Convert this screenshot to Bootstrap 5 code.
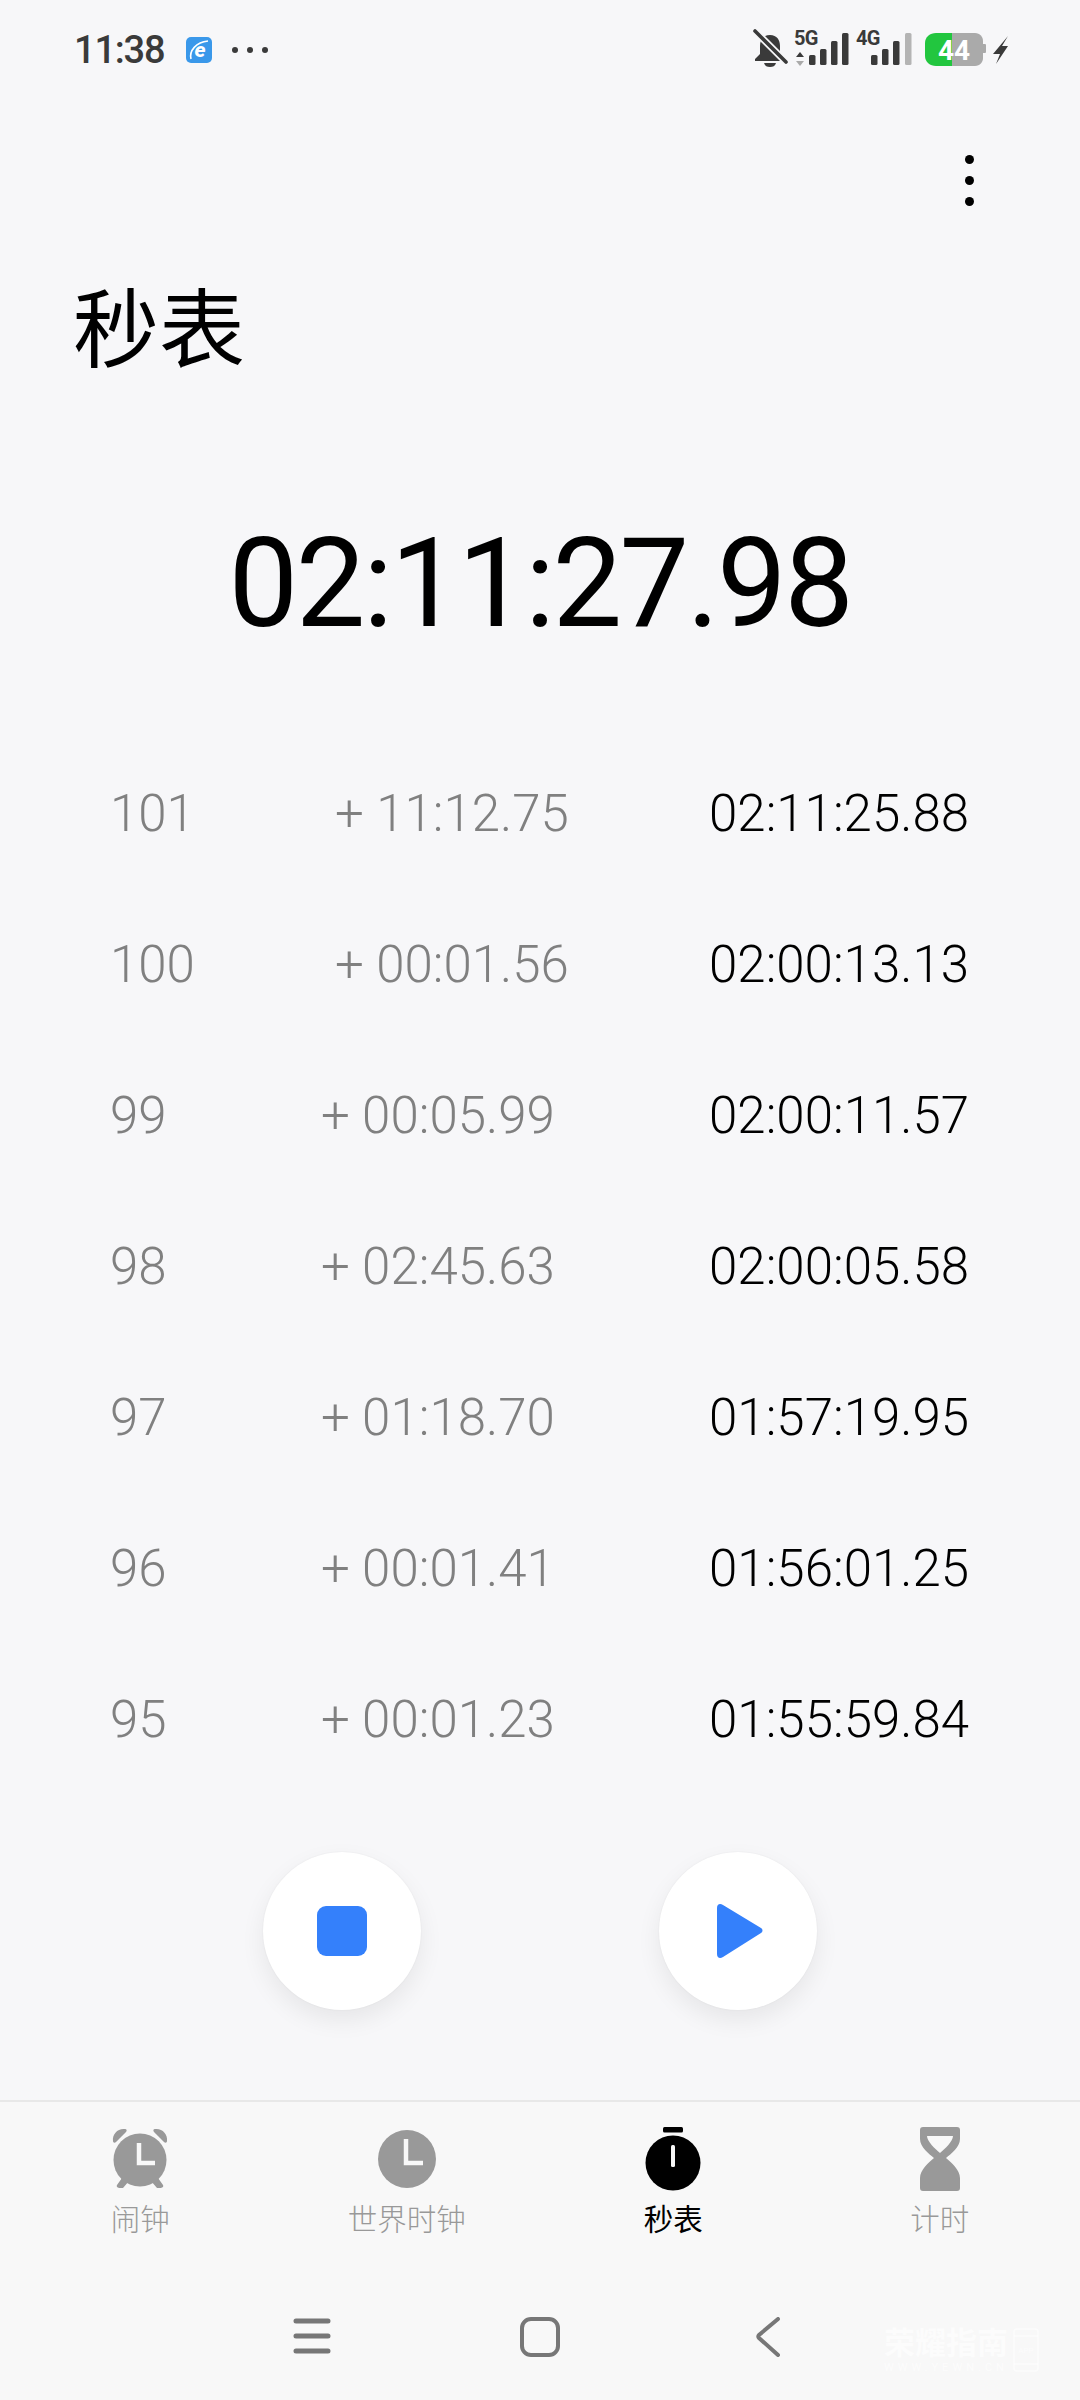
<!DOCTYPE html>
<html lang="zh-Hans">
<head>
  <meta charset="utf-8">
  <title>秒表</title>
  <meta name="viewport" content="width=device-width, initial-scale=1">
  <link href="https://cdn.jsdelivr.net/npm/bootstrap@5.3.3/dist/css/bootstrap.min.css" rel="stylesheet">
  <style>
    html, body { height: 2400px; }
    body { background: #f7f7f9; font-family: Roboto, "Noto Sans CJK SC", sans-serif; color: #000; overflow: hidden; }
    .status-bar { height: 100px; padding: 0 72px 0 74px; }
    .status-time { font-size: 38px; font-weight: 500; color: #3a3a3a; line-height: 1; letter-spacing: -1.2px; }
    .status-app { margin-left: 22px; }
    .status-more { margin-left: 20px; gap: 9px; }
    .status-more span { width: 6px; height: 6px; border-radius: 50%; background: #3a3a3a; }
    .menu-row { height: 160px; padding-right: 106px; }
    .menu-dot { width: 9px; height: 9px; border-radius: 50%; background: #000; }
    .menu-dots { gap: 12px; }
    .page-title { font-size: 86px; font-weight: 400; line-height: 1; margin: 21px 0 0 73px; font-family: "Noto Sans CJK SC", sans-serif; }
    .big-time { font-size: 124px; font-weight: 400; line-height: 1; text-align: center; margin-top: 155px; letter-spacing: -2.5px; }
    .lap-list { margin-top: 92px; padding: 0 111px 0 110px; }
    .lap-row { height: 151px; font-size: 51px; line-height: 1; }
    .lap-num, .lap-delta { color: #808080; font-weight: 300; }
    .lap-total { font-weight: 350; }
    .ctrl-row { margin-top: 57px; gap: 238px; padding-right: 1px; }
    .ctrl-btn { width: 158px; height: 158px; border-radius: 50%; background: #fff; border: 0; padding: 0; box-shadow: 0 10px 24px rgba(0, 0, 0, .07), 0 0 2px rgba(0, 0, 0, .06); }
    .tab-bar { margin-top: 90px; height: 190px; border-top: 2px solid #e8e8e8; background: #f8f8f8; padding: 0 7px; }
    .tab-item { color: #999; font-size: 29.5px; line-height: 1; font-family: "Noto Sans CJK SC", sans-serif; font-weight: 300; }
    .tab-item svg { display: block; margin-top: 26px; margin-bottom: 13px; }
    .tab-on { color: #000; font-weight: 400; }
    .sys-bar { height: 110px; background: #f8f8f8; }
    .sys-slot { width: 228px; margin-top: 3px; }
    .wm { right: 41px; top: 38px; color: rgba(255, 255, 255, .6); gap: 5px; }
    .wm-name { font-size: 31px; line-height: 32px; font-family: Roboto, "Noto Sans CJK SC", sans-serif; font-weight: 700; }
    .wm-sub { font-size: 11px; line-height: 12px; letter-spacing: 4px; margin-top: 2px; font-family: Roboto, sans-serif; }
  </style>
</head>
<body>
  <div class="d-flex flex-column" style="height:2400px">

    <div class="status-bar d-flex align-items-center justify-content-between">
      <div class="d-flex align-items-center">
        <span class="status-time">11:38</span>
        <svg class="status-app" width="26" height="26" viewBox="0 0 26 26">
          <rect width="26" height="26" rx="5" fill="#3a98ea"/>
          <path d="M5 22C3 14 10 5 22 4" stroke="#fff" stroke-width="1.6" fill="none"/>
          <text x="14" y="20" text-anchor="middle" font-family="Roboto" font-style="italic" font-weight="800" font-size="21" fill="#fff">e</text>
        </svg>
        <div class="status-more d-flex"><span></span><span></span><span></span></div>
      </div>
      <svg width="256" height="50" viewBox="752 20 256 50" style="margin-top:-10px">
        <path d="M770 35c-7 0-10 5-10 11v8l-5 5v2h30v-2l-5-5v-8c0-6-3-11-10-11z" fill="#3a3a3a"/>
        <path d="M764 63h12c-1 3-3 4-6 4s-5-1-6-4z" fill="#3a3a3a"/>
        <path d="M755 31l31 31" stroke="#f7f7f9" stroke-width="7"/>
        <path d="M755 31l31 31" stroke="#3a3a3a" stroke-width="3.6" stroke-linecap="round"/>
        <text x="794" y="45" font-family="Roboto" font-weight="700" font-size="20" fill="#3a3a3a" letter-spacing="-.8">5G</text>
        <path d="M800 52l4 5h-8z" fill="#3a3a3a"/><path d="M800 66l4-5h-8z" fill="#aaa"/>
        <rect x="809" y="55" width="6.5" height="10" rx="1.5" fill="#3a3a3a"/>
        <rect x="820" y="49" width="6.5" height="16" rx="1.5" fill="#3a3a3a"/>
        <rect x="831" y="41" width="6.5" height="24" rx="1.5" fill="#3a3a3a"/>
        <rect x="842" y="33" width="6.5" height="32" rx="1.5" fill="#3a3a3a"/>
        <text x="856" y="45" font-family="Roboto" font-weight="700" font-size="20" fill="#3a3a3a" letter-spacing="-.8">4G</text>
        <rect x="871" y="55" width="6.5" height="10" rx="1.5" fill="#3a3a3a"/>
        <rect x="882" y="49" width="6.5" height="16" rx="1.5" fill="#3a3a3a"/>
        <rect x="893" y="41" width="6.5" height="24" rx="1.5" fill="#3a3a3a"/>
        <rect x="905" y="33" width="6.5" height="32" rx="1.5" fill="#b4b4b4"/>
        <path d="M952 33h23c5 0 8 4 8 8v17c0 4-3 8-8 8h-23z" fill="#aaa"/>
        <path d="M983 44h2c1 0 1 1 1 1v7s0 1-1 1h-2z" fill="#aaa"/>
        <path d="M952 33h-16c-6 0-11 4-11 10v13c0 6 5 10 11 10h16z" fill="#22c63f"/>
        <text x="954" y="60" text-anchor="middle" font-family="Roboto" font-weight="700" font-size="28" fill="#fff">44</text>
        <path d="M1008 36l-15 18h7l-4 10 12-18h-6z" fill="#3a3a3a"/>
      </svg>
    </div>

    <div class="menu-row d-flex justify-content-end align-items-center">
      <div class="menu-dots d-flex flex-column">
        <span class="menu-dot"></span><span class="menu-dot"></span><span class="menu-dot"></span>
      </div>
    </div>

    <h1 class="page-title">秒表</h1>

    <div class="big-time">02:11:27.98</div>

    <div class="lap-list" id="laps"></div>

    <div class="ctrl-row d-flex justify-content-center">
      <button class="ctrl-btn d-flex align-items-center justify-content-center" type="button" aria-label="停止">
        <svg width="50" height="50" viewBox="0 0 50 50"><rect width="50" height="50" rx="9" fill="#3480fb"/></svg>
      </button>
      <button class="ctrl-btn d-flex align-items-center justify-content-center" type="button" aria-label="继续">
        <svg width="48" height="56" viewBox="0 0 48 56" style="margin-left:5px"><path d="M1 5c0-4 3-5 6-3l38 23c2 1 2 4 0 5L7 54c-3 2-6 1-6-3z" fill="#3480fb"/></svg>
      </button>
    </div>

    <nav class="tab-bar row g-0">
      <div class="tab-item col-3 d-flex flex-column align-items-center">
        <svg width="56" height="62" viewBox="0 0 56 62">
          <path d="M1 13C0 6 6 0 13 1c2 0 2 2 1 3L4 14c-1 1-3 1-3-1zM55 13c1-7-5-13-12-12-2 0-2 2-1 3l10 10c1 1 3 1 3-1z" fill="#999"/>
          <path d="M10 50l-5 7c-1 2 1 3 3 3h3l6-7zM46 50l5 7c1 2-1 3-3 3h-3l-6-7z" fill="#999"/>
          <circle cx="28" cy="32" r="26.5" fill="#999"/>
          <path d="M27 15v20h16" fill="none" stroke="#f8f8f8" stroke-width="4.5"/>
        </svg>
        <span>闹钟</span>
      </div>
      <div class="tab-item col-3 d-flex flex-column align-items-center">
        <svg width="58" height="62" viewBox="0 0 58 62">
          <circle cx="29" cy="31" r="29" fill="#999"/>
          <path d="M28 11v24h17" fill="none" stroke="#f8f8f8" stroke-width="4.5"/>
        </svg>
        <span>世界时钟</span>
      </div>
      <div class="tab-item tab-on col-3 d-flex flex-column align-items-center">
        <svg width="56" height="64" viewBox="0 0 56 64" style="margin-top:25px;margin-bottom:12px">
          <rect x="18" y="0" width="20" height="5.5" rx="1.5" fill="#000"/>
          <circle cx="28" cy="36" r="27.5" fill="#000"/>
          <rect x="26" y="18" width="4" height="22" rx="1.5" fill="#f8f8f8"/>
        </svg>
        <span>秒表</span>
      </div>
      <div class="tab-item col-3 d-flex flex-column align-items-center">
        <svg width="40" height="64" viewBox="0 0 40 64" style="margin-top:25px;margin-bottom:12px">
          <path fill-rule="evenodd" d="M3 0h34c2 0 3 1 3 3v9c0 8-9 15-14 19 5 4 14 12 14 20v10c0 2-1 3-3 3H3c-2 0-3-1-3-3V51c0-8 9-16 14-20C9 27 0 20 0 12V3c0-2 1-3 3-3zM7 9c0 5 8 13 13 17 5-4 13-12 13-17z" fill="#999"/>
        </svg>
        <span>计时</span>
      </div>
    </nav>

    <div class="sys-bar position-relative d-flex justify-content-center pt-4">
      <div class="sys-slot d-flex justify-content-center" style="margin-top:4px">
        <svg width="38" height="36" viewBox="0 0 38 36"><path d="M3 3h32M3 18h32M3 33h32" stroke="#777" stroke-width="5" stroke-linecap="round"/></svg>
      </div>
      <div class="sys-slot d-flex justify-content-center">
        <svg width="40" height="40" viewBox="0 0 40 40"><rect x="2" y="2" width="36" height="36" rx="9" fill="none" stroke="#777" stroke-width="4"/></svg>
      </div>
      <div class="sys-slot d-flex justify-content-center">
        <svg width="26" height="40" viewBox="0 0 26 40"><path d="M23 2L4 18c-1 1-1 2 0 3l19 17" fill="none" stroke="#777" stroke-width="4" stroke-linecap="round"/></svg>
      </div>
      <div class="wm position-absolute d-flex text-nowrap">
        <div>
          <div class="wm-name">荣耀指南</div>
          <div class="wm-sub">WWW.YEWN.CN</div>
        </div>
        <svg width="26" height="44" viewBox="0 0 26 44">
          <rect x="1" y="1" width="24" height="42" rx="3" fill="none" stroke="#fff" stroke-opacity=".6" stroke-width="1.5"/>
          <path d="M1 8h24M1 36h24" stroke="#fff" stroke-opacity=".6" stroke-width="1.5"/>
          <text x="13" y="25" text-anchor="middle" font-family="Roboto" font-size="8" fill="#fff" fill-opacity=".6">APP</text>
        </svg>
      </div>
    </div>
  </div>

  <script src="https://cdn.jsdelivr.net/npm/bootstrap@5.3.3/dist/js/bootstrap.bundle.min.js"></script>
  <script>
  const laps = [
    [101, "+ 11:12.75", "02:11:25.88"],
    [100, "+ 00:01.56", "02:00:13.13"],
    [99, "+ 00:05.99", "02:00:11.57"],
    [98, "+ 02:45.63", "02:00:05.58"],
    [97, "+ 01:18.70", "01:57:19.95"],
    [96, "+ 00:01.41", "01:56:01.25"],
    [95, "+ 00:01.23", "01:55:59.84"]
  ];
  const list = document.getElementById("laps");
  laps.forEach(l => {
    const row = document.createElement("div");
    row.className = "lap-row d-flex justify-content-between align-items-center";
    row.innerHTML = `<span class="lap-num">${l[0]}</span><span class="lap-delta">${l[1]}</span><span class="lap-total">${l[2]}</span>`;
    list.appendChild(row);
  });
  </script>
</body>
</html>
